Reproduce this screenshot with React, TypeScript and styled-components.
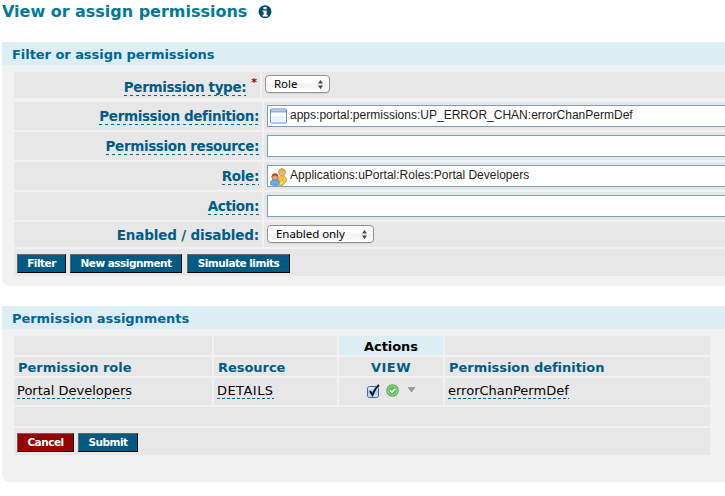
import React from "react";
import styled, { createGlobalStyle } from "styled-components";

const Global = createGlobalStyle`
  * { box-sizing: border-box; }
  html, body { margin: 0; background: #fff; overflow: hidden; }
  body { font-family: "DejaVu Sans", Verdana, sans-serif; font-size: 13px; color: #000; }
`;
const Page = styled.main`
  height: 496px;
  padding-left: 2px;
  overflow: hidden;
  white-space: nowrap;
`;
const Title = styled.h1`
  display: flex;
  align-items: center;
  gap: 11px;
  height: 24px;
  margin: 0 0 18px;
  color: #007a99;
  font-size: 16px;
  line-height: 26px;
  letter-spacing: -0.02px;
  svg { flex: none; }
`;
const Panel = styled.section<{ $h: number }>`
  height: ${(p) => p.$h}px;
  margin-bottom: 20px;
  background: #f1f1f1;
  border-bottom-left-radius: 7px;
`;
const PanelTitle = styled.h2`
  height: 23px;
  margin: 0 0 7px;
  padding-left: 10px;
  background: #dcedf4;
  color: #006699;
  font-size: 13px;
  line-height: 25px;
  letter-spacing: -0.05px;
`;
const Form = styled.div`
  display: flex;
  flex-direction: column;
  gap: 2px;
  margin-left: 12px;
`;
const FormRow = styled.div<{ $label: number; $h: number; $after?: number }>`
  display: grid;
  grid-template-columns: ${(p) => p.$label}px 1fr;
  gap: 2px;
  height: ${(p) => p.$h}px;
  margin-bottom: ${(p) => p.$after || 0}px;
`;
const LabelCell = styled.div<{ $top: number }>`
  display: flex;
  justify-content: flex-end;
  align-items: flex-start;
  padding: ${(p) => p.$top}px 3px 0 0;
  background: #e7e7e7;
`;
const Label = styled.span<{ $spacing?: number; $plain?: boolean }>`
  height: 18px;
  color: #005b88;
  font-weight: bold;
  font-size: 13.5px;
  line-height: 18px;
  letter-spacing: ${(p) => p.$spacing ?? -0.36}px;
  background: ${(p) =>
    p.$plain ? "none" : "repeating-linear-gradient(90deg, #006699 0 3px, transparent 3px 6px) left bottom / 100% 1px no-repeat"};
`;
const Required = styled.sup`
  margin: -3px 0 0 5px;
  color: #a00000;
  font: bold 11px/15px "DejaVu Sans", sans-serif;
`;
const FieldCell = styled.div`
  padding: 3px 0 0 3px;
  background: #e7e7e7;
`;
const Input = styled.div`
  display: flex;
  align-items: flex-start;
  height: 22px;
  padding: 2px 0 0 2px;
  border: 1px solid #7e9dba;
  border-right: 0;
  background: #fff;
  color: #222;
  font: 12px/14px "Liberation Sans", Arial, sans-serif;
  svg { flex: none; margin-right: 3px; }
`;
const InputText = styled.span`
  letter-spacing: 0.01px;
`;
const Select = styled.div<{ $w: number }>`
  display: flex;
  align-items: center;
  justify-content: space-between;
  width: ${(p) => p.$w}px;
  height: 18px;
  padding: 0 6px 0 8px;
  border: 1px solid #929292;
  border-radius: 4px;
  background: linear-gradient(#fff, #fafafa 50%, #f1f1f1 51%, #fff);
  box-shadow: 0 1px 0 #d5d5d5;
  font: 11.5px/16px "Noto Sans", sans-serif;
  letter-spacing: -0.05px;
`;
const Buttons = styled.div`
  display: flex;
  gap: 4px;
  height: 27px;
  padding: 5px 3px 0;
  background: #e7e7e7;
`;
const Button = styled.button<{ $w: number; $danger?: boolean; $before?: number }>`
  width: ${(p) => p.$w}px;
  height: 19px;
  margin: 0 0 0 ${(p) => p.$before || 0}px;
  padding: 0;
  border: 1px solid;
  border-color: #666 #000 #000 #666;
  background: ${(p) => (p.$danger ? "#990000" : "#005b84")};
  color: #fff;
  font: bold 10.5px/17px "DejaVu Sans", Verdana, sans-serif;
  letter-spacing: -0.5px;
  white-space: nowrap;
`;
const Grid = styled.div`
  display: grid;
  grid-template-columns: 198px 123px 104px 265px;
  grid-template-rows: 19px 19px 27px 19px 27px;
  gap: 2px;
  margin-left: 12px;
`;
const Cell = styled.div<{ $head?: boolean; $center?: boolean; $active?: boolean; $span?: boolean }>`
  grid-column: ${(p) => (p.$span ? "1 / -1" : "auto")};
  display: flex;
  justify-content: ${(p) => (p.$center ? "center" : "flex-start")};
  align-items: flex-start;
  padding: 0 ${(p) => (p.$head ? 4 : 3)}px;
  background: ${(p) => (p.$active ? "#dcedf4" : "#e7e7e7")};
  color: ${(p) => (p.$active ? "#000" : "#005b88")};
  font-weight: bold;
  line-height: 21px;
  letter-spacing: -0.04px;
`;
const FooterCell = styled(Buttons)`
  grid-column: 1 / -1;
`;
const Value = styled.span<{ $spacing?: number }>`
  height: 17px;
  margin-top: 4px;
  color: #000;
  font-weight: normal;
  line-height: 17px;
  letter-spacing: ${(p) => p.$spacing ?? 0}px;
  background: repeating-linear-gradient(90deg, #006699 0 3px, transparent 3px 5px) left bottom / 100% 1px no-repeat;
`;
const ActionName = styled.span`
  letter-spacing: 0.5px;
`;
const ViewCell = styled(Cell)`
  justify-content: flex-start;
  padding: 6px 0 0 28px;
  gap: 6px;
`;

const Info = () => (
  <svg width="14" height="14" viewBox="0 0 13 13">
    <circle cx="6.5" cy="6.2" r="6" fill="#004c70" />
    <path d="M5 1.8h3v2.200H5zM4.300 5H8v4.300h1v1.300H4.200V9.300h1v-3h-.9z" fill="#fff" />
  </svg>
);
const WindowIcon = () => (
  <svg width="17" height="16" viewBox="0 0 17 16">
    <rect x=".5" y="1" width="16" height="14" rx=".8" fill="#fff" stroke="#5d8fc8" />
    <path d="M1 1.5h15v3H1z" fill="#80b0e8" />
    <path d="M1.5 2h14v1h-14z" fill="#b8d5f5" />
    <path d="M2 8h13v6H2z" fill="#edf3fb" />
  </svg>
);
const PeopleIcon = () => (
  <svg width="17" height="18" viewBox="0 0 17 18">
    <path d="M8 17v-4c0-3 1-5 4-5s5 2 5 4.500L12 18z" fill="#f5c04a" stroke="#d79225" strokeWidth=".7" />
    <circle cx="12" cy="4.300" r="3.500" fill="#edbd77" stroke="#c48a3c" strokeWidth=".7" />
    <path d="M8.500 4c0-5 7-5 7 0-2 0-3-.3-4-1.500-.7 1-1.500 1.500-3 1.500z" fill="#e0a83d" />
    <path d="M.5 16.500c0-4 1.500-5 4.500-5s4.500 1 4.500 5c-2 1.300-7 1.300-9 0z" fill="#62aee9" stroke="#357fc2" strokeWidth=".7" />
    <circle cx="5" cy="9" r="3.200" fill="#e8a078" stroke="#a45533" strokeWidth=".6" />
    <path d="M1.700 8.500C2 4 8 4 8.300 8.500c-1.800 0-2.500-.5-3.300-1.300-.8.900-1.800 1.300-3.300 1.300z" fill="#a75127" />
    <path d="M9 16l3-4 2 2-4 3.500z" fill="#ffe178" stroke="#dc9d22" strokeWidth=".6" />
  </svg>
);
const Arrows = () => (
  <svg width="5" height="9" viewBox="0 0 5 9">
    <path d="M0 3.500L2.500 0 5 3.500zM0 5.500h5L2.500 9z" fill="#444" />
  </svg>
);
const Check = () => (
  <svg width="13" height="16" viewBox="0 0 13 16">
    <defs>
      <linearGradient id="boxFill" x2="0" y2="1">
        <stop stopColor="#f0f7ff" />
        <stop offset=".5" stopColor="#9cc8f5" />
        <stop offset="1" stopColor="#c8edff" />
      </linearGradient>
    </defs>
    <rect x=".5" y="2.500" width="11" height="11" rx="2" fill="url(#boxFill)" stroke="#45658f" />
    <path d="M3 7l2.500 4C7 7 9 3.500 12 1" fill="none" stroke="#080f20" strokeWidth="1.900" />
  </svg>
);
const Approved = () => (
  <svg width="13" height="13" viewBox="0 0 13 13">
    <circle cx="6.500" cy="6.500" r="5.600" fill="#b9e3b2" stroke="#4fa94d" strokeWidth="1.200" />
    <circle cx="6.500" cy="6.500" r="4.300" fill="#62bd57" />
    <path d="M4 6.300l2 2 3.200-3.600" fill="none" stroke="#fff" strokeWidth="1.700" />
  </svg>
);
const MenuArrow = styled.svg`
  margin: 3px 0 0 3px;
`;

type FieldProps = { label: string; spacing?: number; children?: React.ReactNode };
const Field = ({ label, spacing, children }: FieldProps) => (
  <FormRow $label={248} $h={28}>
    <LabelCell $top={5}>
      <Label $spacing={spacing}>{label}</Label>
    </LabelCell>
    <FieldCell>
      <Input>{children}</Input>
    </FieldCell>
  </FormRow>
);

export default function App() {
  return (
    <>
      <Global />
      <Page>
        <Title>
          <span>View or assign permissions</span>
          <Info />
        </Title>
        <Panel $h={244}>
          <PanelTitle>Filter or assign permissions</PanelTitle>
          <Form>
            <FormRow $label={246} $h={26} $after={2}>
              <LabelCell $top={6}>
                <Label>Permission type:</Label>
                <Required>*</Required>
              </LabelCell>
              <FieldCell>
                <Select $w={65}>Role<Arrows /></Select>
              </FieldCell>
            </FormRow>
            <Field label="Permission definition:">
              <WindowIcon />
              <InputText>apps:portal:permissions:UP_ERROR_CHAN:errorChanPermDef</InputText>
            </Field>
            <Field label="Permission resource:" />
            <Field label="Role:" spacing={-0.3}>
              <PeopleIcon />
              <InputText>Applications:uPortal:Roles:Portal Developers</InputText>
            </Field>
            <Field label="Action:" />
            <FormRow $label={248} $h={25}>
              <LabelCell $top={4}>
                <Label $plain $spacing={-0.16}>Enabled / disabled:</Label>
              </LabelCell>
              <FieldCell>
                <Select $w={107}>Enabled only<Arrows /></Select>
              </FieldCell>
            </FormRow>
            <Buttons>
              <Button $w={49}>Filter</Button>
              <Button $w={112}>New assignment</Button>
              <Button $w={103} $before={1}>Simulate limits</Button>
            </Buttons>
          </Form>
        </Panel>
        <Panel $h={176}>
          <PanelTitle>Permission assignments</PanelTitle>
          <Grid>
            <Cell />
            <Cell />
            <Cell $head $center $active>Actions</Cell>
            <Cell />
            <Cell $head>Permission role</Cell>
            <Cell $head>Resource</Cell>
            <Cell $head $center><ActionName>VIEW</ActionName></Cell>
            <Cell $head>Permission definition</Cell>
            <Cell><Value>Portal Developers</Value></Cell>
            <Cell><Value $spacing={0.45}>DETAILS</Value></Cell>
            <ViewCell>
              <Check />
              <Approved />
              <MenuArrow width="7" height="5" viewBox="0 0 7 5">
                <path d="M0 .5h7L3.500 5z" fill="#999" stroke="#777" strokeWidth=".4" />
              </MenuArrow>
            </ViewCell>
            <Cell><Value>errorChanPermDef</Value></Cell>
            <Cell $span />
            <FooterCell>
              <Button $w={57} $danger>Cancel</Button>
              <Button $w={60}>Submit</Button>
            </FooterCell>
          </Grid>
        </Panel>
      </Page>
    </>
  );
}
